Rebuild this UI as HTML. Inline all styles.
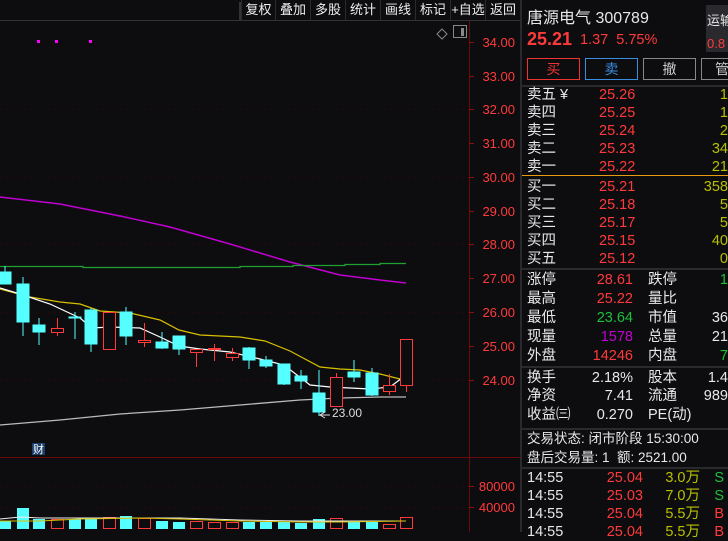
<!DOCTYPE html><html><head><meta charset="utf-8"><style>
*{margin:0;padding:0;box-sizing:border-box}
body{width:728px;height:532px;background:#0d0d10;overflow:hidden;position:relative;font-family:"Liberation Sans","Noto Sans CJK SC",sans-serif;color:#e8e8e8}
.a{position:absolute;white-space:nowrap}
.tb{position:absolute;top:0;height:20px;font-size:13px;line-height:20px;text-align:center;border-left:1px solid #2a2a2e;color:#eee}
.r{color:#ff3a3a}.g{color:#1fbf3a}.y{color:#b8c000}.w{color:#eee}.m{color:#c000d0}
.row{position:absolute;left:527px;font-size:14.5px;line-height:18px;width:201px;height:18px}
.row span{position:absolute}
</style></head><body>
<div class="a" style="left:0;top:20px;width:520px;height:1px;background:#333"></div>
<div class="a" style="left:239px;top:2px;width:2px;height:18px;background:#333"></div>
<div class="tb" style="left:241px;width:34px">复权</div>
<div class="tb" style="left:275px;width:35px">叠加</div>
<div class="tb" style="left:310px;width:35px">多股</div>
<div class="tb" style="left:345px;width:35px">统计</div>
<div class="tb" style="left:380px;width:35px">画线</div>
<div class="tb" style="left:415px;width:35px">标记</div>
<div class="tb" style="left:450px;width:35px">+自选</div>
<div class="tb" style="left:485px;width:35px">返回</div>
<svg class="a" style="left:0;top:0" width="520" height="532">
<g stroke="#3a0606" stroke-dasharray="1 5" stroke-width="1">
<line x1="0" y1="109.5" x2="469" y2="109.5"/><line x1="0" y1="177.5" x2="469" y2="177.5"/><line x1="0" y1="244.5" x2="469" y2="244.5"/><line x1="0" y1="312.5" x2="469" y2="312.5"/><line x1="0" y1="380.5" x2="469" y2="380.5"/><line x1="0" y1="486.5" x2="469" y2="486.5"/><line x1="0" y1="507.5" x2="469" y2="507.5"/></g>
<line x1="469.5" y1="21" x2="469.5" y2="532" stroke="#6a0a0a"/>
<line x1="0" y1="457.5" x2="520" y2="457.5" stroke="#6a0a0a"/>
<g stroke="#8a1010"><line x1="469" y1="42.5" x2="474" y2="42.5"/><line x1="469" y1="76.5" x2="474" y2="76.5"/><line x1="469" y1="109.5" x2="474" y2="109.5"/><line x1="469" y1="143.5" x2="474" y2="143.5"/><line x1="469" y1="177.5" x2="474" y2="177.5"/><line x1="469" y1="211.5" x2="474" y2="211.5"/><line x1="469" y1="244.5" x2="474" y2="244.5"/><line x1="469" y1="278.5" x2="474" y2="278.5"/><line x1="469" y1="312.5" x2="474" y2="312.5"/><line x1="469" y1="346.5" x2="474" y2="346.5"/><line x1="469" y1="380.5" x2="474" y2="380.5"/><line x1="469" y1="486.5" x2="474" y2="486.5"/><line x1="469" y1="507.5" x2="474" y2="507.5"/></g>
<g fill="#ff3a3a" font-size="13" font-family="Liberation Sans" text-anchor="end">
<text x="515" y="47">34.00</text><text x="515" y="81">33.00</text><text x="515" y="114">32.00</text><text x="515" y="148">31.00</text><text x="515" y="182">30.00</text><text x="515" y="216">29.00</text><text x="515" y="249">28.00</text><text x="515" y="283">27.00</text><text x="515" y="317">26.00</text><text x="515" y="351">25.00</text><text x="515" y="385">24.00</text><text x="515" y="491">80000</text><text x="515" y="512">40000</text></g>
<g fill="#f0f"><rect x="37" y="40" width="3" height="3"/><rect x="55" y="40" width="3" height="3"/><rect x="89" y="40" width="3" height="3"/></g>
<path d="M442 29 l5 5 -5 5 -5 -5z" fill="none" stroke="#888"/>
<rect x="453.5" y="25.5" width="13" height="12" fill="none" stroke="#888"/><rect x="461" y="28" width="3" height="8" fill="#888"/>
<polyline points="0,197 60,204 120,216 170,227 230,244 290,262 340,275 380,280 406,283" fill="none" stroke="#c000d0" stroke-width="1.5"/>
<polyline points="0,266.5 83,266.5 83,267.5 240,267.5 240,266.5 293,266.5 293,265.5 345,265.5 345,264.5 380,264.5 380,263.5 406,263.5" fill="none" stroke="#1fa030" stroke-width="1.3"/>
<polyline points="0,425 60,420 120,414 180,410 240,405 300,400 340,398 380,397 406,397" fill="none" stroke="#bbb" stroke-width="1.3"/>
<polyline points="0,289 30,297 60,302 80,304 100,311 130,313 160,320 179,330 200,335 240,337 265,341 290,351 320,367 340,369 360,370 380,374 400,379 406,379" fill="none" stroke="#d8c000" stroke-width="1.2"/>
<polyline points="0,288 20,294 50,304 80,318 92,328 110,327 140,328 160,337 179,346 200,349 230,352 260,359 284,365 310,385 330,387 350,388 370,389 390,387 406,375" fill="none" stroke="#fff" stroke-width="1.2"/>
<g fill="#5ff" stroke="#5ff">
<line x1="5" y1="266" x2="5" y2="284"/><rect x="0" y="272" width="11" height="12"/>
<line x1="23" y1="277" x2="23" y2="336"/><rect x="17" y="284" width="12" height="38"/>
<line x1="39" y1="318" x2="39" y2="345"/><rect x="33" y="325" width="12" height="7"/>
<line x1="75" y1="312" x2="75" y2="339"/><rect x="69" y="317" width="12" height="1"/>
<line x1="91" y1="308" x2="91" y2="352"/><rect x="85" y="310" width="12" height="34"/>
<line x1="126" y1="307" x2="126" y2="345"/><rect x="120" y="312" width="12" height="24"/>
<line x1="162" y1="332" x2="162" y2="349"/><rect x="156" y="342" width="12" height="6"/>
<line x1="179" y1="336" x2="179" y2="355"/><rect x="173" y="336" width="12" height="13"/>
<line x1="249" y1="347" x2="249" y2="369"/><rect x="243" y="348" width="12" height="12"/>
<line x1="266" y1="356" x2="266" y2="368"/><rect x="260" y="360" width="12" height="6"/>
<line x1="284" y1="364" x2="284" y2="385"/><rect x="278" y="364" width="12" height="20"/>
<line x1="301" y1="370" x2="301" y2="389"/><rect x="295" y="376" width="12" height="5"/>
<line x1="319" y1="370" x2="319" y2="416"/><rect x="313" y="393" width="12" height="19"/>
<line x1="354" y1="360" x2="354" y2="382"/><rect x="348" y="372" width="12" height="5"/>
<line x1="372" y1="368" x2="372" y2="396"/><rect x="366" y="373" width="12" height="22"/>
</g>
<g fill="#0d0d10" stroke="#ff3a3a">
<line x1="57.5" y1="318" x2="57.5" y2="336"/><rect x="51.5" y="328.5" width="12" height="4"/>
<rect x="103.5" y="312.5" width="12" height="37"/>
<line x1="144.5" y1="323" x2="144.5" y2="347"/><rect x="138.5" y="340.5" width="12" height="2"/>
<line x1="196.5" y1="349" x2="196.5" y2="367"/><rect x="190.5" y="349.5" width="12" height="3"/>
<line x1="214.5" y1="344" x2="214.5" y2="361"/><rect x="208.5" y="348.5" width="12" height="1"/>
<line x1="232.5" y1="348" x2="232.5" y2="361"/><rect x="226.5" y="353.5" width="12" height="4"/>
<line x1="336.5" y1="373" x2="336.5" y2="378"/><rect x="330.5" y="377.5" width="12" height="29"/>
<line x1="389.5" y1="374" x2="389.5" y2="395"/><rect x="383.5" y="385.5" width="12" height="6"/>
<line x1="406.5" y1="386" x2="406.5" y2="392"/><rect x="400.5" y="339.5" width="12" height="46"/>
</g>
<text x="332" y="417" fill="#ddd" font-size="12" font-family="Liberation Sans">23.00</text>
<path d="M325 412 l-5 3 5 3 M320 415 h10" stroke="#ddd" fill="none"/>
<rect x="32" y="443" width="13" height="12" fill="#1a3f6a"/><text x="33" y="453" fill="#fff" font-size="11">财</text>
<g fill="#5ff"><rect x="0" y="521" width="11" height="8"/><rect x="17" y="508" width="12" height="21"/><rect x="33" y="519" width="12" height="10"/><rect x="69" y="519" width="12" height="10"/><rect x="85" y="518" width="12" height="11"/><rect x="120" y="516" width="12" height="13"/><rect x="156" y="521" width="12" height="8"/><rect x="173" y="522" width="12" height="7"/><rect x="243" y="522" width="12" height="7"/><rect x="260" y="522" width="12" height="7"/><rect x="278" y="522" width="12" height="7"/><rect x="295" y="523" width="12" height="6"/><rect x="313" y="519" width="12" height="10"/><rect x="348" y="522" width="12" height="7"/><rect x="366" y="522" width="12" height="7"/></g>
<g fill="none" stroke="#ff3a3a"><rect x="51.5" y="519.5" width="12" height="9"/><rect x="103.5" y="517.5" width="12" height="11"/><rect x="138.5" y="518.5" width="12" height="10"/><rect x="190.5" y="521.5" width="12" height="7"/><rect x="208.5" y="522.5" width="12" height="6"/><rect x="226.5" y="522.5" width="12" height="6"/><rect x="330.5" y="518.5" width="12" height="10"/><rect x="383.5" y="524.5" width="12" height="4"/><rect x="400.5" y="517.5" width="12" height="11"/></g>
<polyline points="0,519 20,517 40,518 80,518 120,518 180,518 240,520 300,521 340,521 406,521" fill="none" stroke="#eee"/>
<polyline points="0,521 40,521 80,519 140,518 180,519 240,521 300,522 340,522 406,521" fill="none" stroke="#d8c000"/>
</svg>
<div class="a" style="left:520px;top:0;width:2px;height:532px;background:#2a2a2e"></div>
<div class="a" style="left:527px;top:4px;font-size:16px">唐源电气 300789</div>
<div class="a r" style="left:527px;top:29px;font-size:18px;font-weight:bold">25.21</div>
<div class="a r" style="left:580px;top:32px;font-size:14.5px">1.37&nbsp; 5.75%</div>
<div class="a" style="left:706px;top:5px;width:22px;height:47px;background:#2a2a2e;font-size:13px;padding:4px 0 0 1px;line-height:23px">运输<br><span class="r">0.8</span></div>
<div class="a" style="left:527px;top:58px;width:53px;height:22px;border:1px solid #e33;color:#e33;text-align:center;font-size:14px;line-height:20px">买</div>
<div class="a" style="left:585px;top:58px;width:53px;height:22px;border:1px solid #3a8ee0;color:#3a8ee0;text-align:center;font-size:14px;line-height:20px">卖</div>
<div class="a" style="left:643px;top:58px;width:53px;height:22px;border:1px solid #888;color:#ccc;text-align:center;font-size:14px;line-height:20px">撤</div>
<div class="a" style="left:701px;top:58px;width:40px;height:22px;border:1px solid #888;color:#ccc;font-size:14px;line-height:20px;padding-left:13px">管</div>
<div class="a" style="left:522px;top:85px;width:206px;height:2px;background:#2a2a2e"></div>
<div class="a" style="left:522px;top:175px;width:206px;height:1px;background:#e89a10"></div>
<div class="a" style="left:522px;top:268px;width:206px;height:2px;background:#2a2a2e"></div>
<div class="a" style="left:522px;top:366px;width:206px;height:2px;background:#2a2a2e"></div>
<div class="a" style="left:522px;top:428px;width:206px;height:2px;background:#2a2a2e"></div>
<div class="a" style="left:522px;top:467px;width:206px;height:2px;background:#2a2a2e"></div>
<div class="row" style="top:86px"><span>卖五 ¥</span><span class="r" style="left:72px">25.26</span><span class="y" style="right:0">1</span></div>
<div class="row" style="top:104px"><span>卖四</span><span class="r" style="left:72px">25.25</span><span class="y" style="right:0">1</span></div>
<div class="row" style="top:122px"><span>卖三</span><span class="r" style="left:72px">25.24</span><span class="y" style="right:0">2</span></div>
<div class="row" style="top:140px"><span>卖二</span><span class="r" style="left:72px">25.23</span><span class="y" style="right:0">34</span></div>
<div class="row" style="top:158px"><span>卖一</span><span class="r" style="left:72px">25.22</span><span class="y" style="right:0">21</span></div>
<div class="row" style="top:178px"><span>买一</span><span class="r" style="left:72px">25.21</span><span class="y" style="right:0">358</span></div>
<div class="row" style="top:196px"><span>买二</span><span class="r" style="left:72px">25.18</span><span class="y" style="right:0">5</span></div>
<div class="row" style="top:214px"><span>买三</span><span class="r" style="left:72px">25.17</span><span class="y" style="right:0">5</span></div>
<div class="row" style="top:232px"><span>买四</span><span class="r" style="left:72px">25.15</span><span class="y" style="right:0">40</span></div>
<div class="row" style="top:250px"><span>买五</span><span class="r" style="left:72px">25.12</span><span class="y" style="right:0">0</span></div>
<div class="row" style="top:271px"><span>涨停</span><span class="r" style="right:95px">28.61</span><span style="left:121px">跌停</span><span class="g" style="right:0">1</span></div>
<div class="row" style="top:290px"><span>最高</span><span class="r" style="right:95px">25.22</span><span style="left:121px">量比</span></div>
<div class="row" style="top:309px"><span>最低</span><span class="g" style="right:95px">23.64</span><span style="left:121px">市值</span><span style="right:0">36</span></div>
<div class="row" style="top:328px"><span>现量</span><span class="m" style="right:95px">1578</span><span style="left:121px">总量</span><span style="right:0">21</span></div>
<div class="row" style="top:347px"><span>外盘</span><span class="r" style="right:95px">14246</span><span style="left:121px">内盘</span><span class="g" style="right:0">7</span></div>
<div class="row" style="top:369px"><span>换手</span><span style="right:95px">2.18%</span><span style="left:121px">股本</span><span style="right:0">1.4</span></div>
<div class="row" style="top:387px"><span>净资</span><span style="right:95px">7.41</span><span style="left:121px">流通</span><span style="right:0">989</span></div>
<div class="row" style="top:406px"><span>收益㈢</span><span style="right:95px">0.270</span><span style="left:121px">PE(动)</span></div>
<div class="row" style="top:430px;font-size:13.5px"><span>交易状态: 闭市阶段 15:30:00</span></div>
<div class="row" style="top:449px;font-size:13.5px"><span>盘后交易量: 1&nbsp; 额: 2521.00</span></div>
<div class="row" style="top:469px"><span>14:55</span><span class="r" style="right:85px">25.04</span><span class="y" style="right:28px">3.0万</span><span class="g" style="right:4px">S</span></div>
<div class="row" style="top:487px"><span>14:55</span><span class="r" style="right:85px">25.03</span><span class="y" style="right:28px">7.0万</span><span class="g" style="right:4px">S</span></div>
<div class="row" style="top:505px"><span>14:55</span><span class="r" style="right:85px">25.04</span><span class="y" style="right:28px">5.5万</span><span class="r" style="right:4px">B</span></div>
<div class="row" style="top:523px"><span>14:55</span><span class="r" style="right:85px">25.04</span><span class="y" style="right:28px">5.5万</span><span class="r" style="right:4px">B</span></div>
</body></html>
